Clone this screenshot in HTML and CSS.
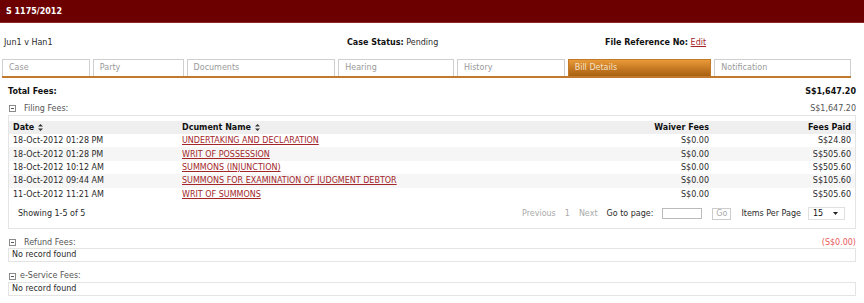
FILE: index.html
```html
<!DOCTYPE html>
<html>
<head>
<meta charset="utf-8">
<link rel="stylesheet" href="styles.css">
</head>
<body>
<div class="topbar">S 1175/2012</div>
<div class="info">
  <div>Jun1 v Han1</div>
  <div><b>Case Status:</b> Pending</div>
  <div><b>File Reference No:</b> <a href="#">Edit</a></div>
</div>
<div class="tabs">
  <div class="tab t-case">Case</div>
  <div class="tab t-party">Party</div>
  <div class="tab t-docs">Documents</div>
  <div class="tab t-hearing">Hearing</div>
  <div class="tab t-history">History</div>
  <div class="tab t-bill active">Bill Details</div>
  <div class="tab t-notif">Notification</div>
</div>
<div class="content">
  <div class="summary"><b>Total Fees:</b><b>S$1,647.20</b></div>

  <div class="section-head sh-filing">
    <span class="label"><span class="minus"></span>Filing Fees:</span>
    <span>S$1,647.20</span>
  </div>
  <div class="panel">
    <table class="grid">
      <colgroup><col class="c1"><col class="c2"><col class="c3"><col class="c4"></colgroup>
      <thead>
        <tr>
          <th>Date <svg class="sort" width="5" height="7" viewBox="0 0 5 7"><path d="M2.5 0L5 2.6H0Z M2.5 7L5 4.4H0Z" fill="#333"/></svg></th>
          <th>Dcument Name <svg class="sort" width="5" height="7" viewBox="0 0 5 7"><path d="M2.5 0L5 2.6H0Z M2.5 7L5 4.4H0Z" fill="#333"/></svg></th>
          <th class="r">Waiver Fees</th>
          <th class="r">Fees Paid</th>
        </tr>
      </thead>
      <tbody>
        <tr><td>18-Oct-2012 01:28 PM</td><td><a href="#">UNDERTAKING AND DECLARATION</a></td><td class="r">S$0.00</td><td class="r">S$24.80</td></tr>
        <tr class="alt"><td>18-Oct-2012 01:28 PM</td><td><a href="#">WRIT OF POSSESSION</a></td><td class="r">S$0.00</td><td class="r">S$505.60</td></tr>
        <tr><td>18-Oct-2012 10:12 AM</td><td><a href="#">SUMMONS (INJUNCTION)</a></td><td class="r">S$0.00</td><td class="r">S$505.60</td></tr>
        <tr class="alt"><td>18-Oct-2012 09:44 AM</td><td><a href="#">SUMMONS FOR EXAMINATION OF JUDGMENT DEBTOR</a></td><td class="r">S$0.00</td><td class="r">S$105.60</td></tr>
        <tr><td>11-Oct-2012 11:21 AM</td><td><a href="#">WRIT OF SUMMONS</a></td><td class="r">S$0.00</td><td class="r">S$505.60</td></tr>
      </tbody>
    </table>
    <div class="pager">
      <div class="showing">Showing 1-5 of 5</div>
      <div class="controls">
        <span class="dim">Previous</span>
        <span class="dim">1</span>
        <span class="dim">Next</span>
        <span class="goto">Go to page:</span>
        <span class="input"></span>
        <span class="go">Go</span>
        <span class="ipp">Items Per Page</span>
        <span class="select">15<svg width="5" height="3" viewBox="0 0 5 3"><path d="M0 0H5L2.5 3Z" fill="#222"/></svg></span>
      </div>
    </div>
  </div>

  <div class="section-head sh-refund">
    <span class="label"><span class="minus"></span>Refund Fees:</span>
    <span class="neg">(S$0.00)</span>
  </div>
  <div class="empty">No record found</div>

  <div class="section-head sh-eservice">
    <span class="label tight"><span class="minus"></span>e-Service Fees:</span>
  </div>
  <div class="empty">No record found</div>
</div>
</body>
</html>
```
FILE: styles.css
```css
* { box-sizing: border-box; }
html, body { margin: 0; padding: 0; background: #fff; }
body {
  font-family: "DejaVu Sans", Verdana, sans-serif;
  font-size: 8px;
  color: #2a2a2a;
  width: 864px;
  height: 303px;
  overflow: hidden;
}
a { color: #a3262b; text-decoration: underline; }

.topbar {
  height: 23px;
  background: #6c0000;
  border-bottom: 1px solid #8f2a2a;
  color: #fff;
  font-weight: bold;
  line-height: 23px;
  padding-left: 6px;
}

.info {
  display: grid;
  grid-template-columns: 343px 258px 1fr;
  padding: 0 4px;
  margin-top: 14px;
  height: 11px;
  line-height: 11px;
  margin-bottom: 11px;
}
.info b { color: #111; }

.tabs {
  display: flex;
  gap: 3px;
  margin: 0 13px 0 2px;
  border-bottom: 2px solid #c17a2c;
  height: 19px;
}
.tab {
  height: 17px;
  border: 1px solid #cfcfcf;
  border-bottom: none;
  color: #9a9a9a;
  padding-left: 6px;
  line-height: 16px;
}
.t-case { width: 88px; }
.t-party { width: 91px; }
.t-docs { width: 149px; }
.t-hearing { width: 116px; }
.t-history { width: 108px; }
.t-bill { width: 144px; }
.t-notif { width: 137px; }
.tab.active {
  background: linear-gradient(#e99a38, #c27520 60%, #a86212);
  border-color: #c07a2a;
  color: #f5e2c8;
}

.content { padding: 0 8px; }

.summary {
  display: flex;
  justify-content: space-between;
  margin-top: 7px;
  height: 13px;
  line-height: 13px;
  color: #111;
}

.section-head {
  display: flex;
  justify-content: space-between;
  align-items: center;
  height: 12px;
  line-height: 12px;
  color: #555;
}
.sh-filing { margin-top: 4px; height: 13px; }
.sh-refund { margin-top: 8px; height: 11px; }
.sh-eservice { margin-top: 8px; height: 12px; }
.label { display: flex; align-items: center; padding-left: 1px; }
.minus {
  width: 7px;
  height: 7px;
  border: 1px solid #8a8a8a;
  position: relative;
  margin-right: 8px;
  background: #fff;
}
.tight .minus { margin-right: 4px; }
.minus::after {
  content: "";
  position: absolute;
  left: 1px;
  right: 1px;
  top: 2px;
  height: 1px;
  background: #555;
}
.neg { color: #ec5a5a; }

.panel {
  border: 1px solid #e4e4e4;
  padding-top: 5px;
  height: 114px;
}
.grid {
  width: 100%;
  border-collapse: collapse;
  table-layout: fixed;
}
.c1 { width: 169px; }
.c3 { width: 136px; }
.c4 { width: 142px; }
.grid th, .grid td {
  padding: 0 4px;
  height: 13.4px;
  line-height: 13px;
  text-align: left;
  white-space: nowrap;
  overflow: hidden;
}
.grid th { background: #efefef; color: #111; font-weight: bold; height: 13px; }
.grid .r { text-align: right; }
.grid tr.alt td { background: #f6f6f6; }
.sort { vertical-align: -1px; margin-left: 1px; }

.pager {
  display: flex;
  justify-content: space-between;
  align-items: center;
  padding: 0 10px 0 9px;
  margin-top: 6px;
  height: 14px;
}
.controls { display: flex; align-items: center; }
.dim { color: #aaa; margin-right: 9px; }
.goto { margin-right: 9px; }
.input {
  width: 40px;
  height: 11px;
  border: 1px solid #bbb;
  margin-right: 10px;
}
.go {
  width: 19px;
  height: 12px;
  border: 1px solid #ccc;
  color: #aaa;
  text-align: center;
  line-height: 10px;
  margin-right: 10px;
}
.ipp { margin-right: 7px; }
.select {
  width: 37px;
  height: 13px;
  border: 1px solid #e0e0e0;
  display: flex;
  align-items: center;
  justify-content: space-between;
  padding: 0 6px 0 4px;
  color: #111;
}

.empty {
  border: 1px solid #e4e4e4;
  height: 14px;
  line-height: 12px;
  padding-left: 3px;
}
```
